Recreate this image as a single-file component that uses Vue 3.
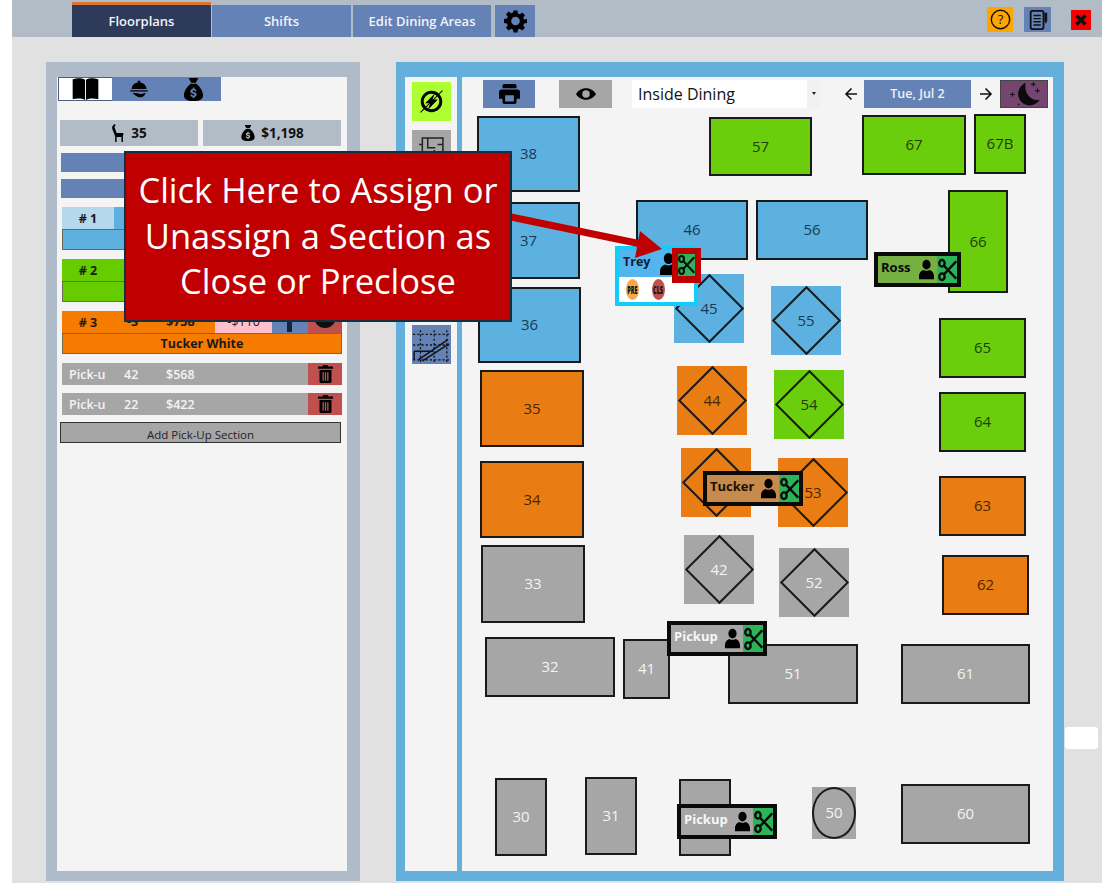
<script setup>
const originX = 462
const originY = 110

const tables = [
  { n: '38', x: 477, y: 116, w: 103, h: 76, c: 'blue' },
  { n: '37', x: 477, y: 202, w: 103, h: 77, c: 'blue' },
  { n: '36', x: 478, y: 287, w: 103, h: 76, c: 'blue' },
  { n: '46', x: 636, y: 200, w: 112, h: 60, c: 'blue' },
  { n: '56', x: 756, y: 200, w: 112, h: 60, c: 'blue' },
  { n: '57', x: 709, y: 117, w: 103, h: 59, c: 'green' },
  { n: '67', x: 862, y: 115, w: 104, h: 60, c: 'green' },
  { n: '67B', x: 974, y: 114, w: 52, h: 60, c: 'green' },
  { n: '66', x: 948, y: 190, w: 60, h: 103, c: 'green' },
  { n: '65', x: 939, y: 318, w: 87, h: 60, c: 'green' },
  { n: '64', x: 939, y: 392, w: 87, h: 60, c: 'green' },
  { n: '35', x: 480, y: 370, w: 104, h: 77, c: 'orange' },
  { n: '34', x: 480, y: 461, w: 104, h: 77, c: 'orange' },
  { n: '63', x: 939, y: 476, w: 87, h: 60, c: 'orange' },
  { n: '62', x: 942, y: 555, w: 87, h: 60, c: 'orange' },
  { n: '33', x: 481, y: 545, w: 104, h: 78, c: 'gray' },
  { n: '32', x: 485, y: 637, w: 130, h: 60, c: 'gray' },
  { n: '41', x: 623, y: 639, w: 47, h: 60, c: 'gray' },
  { n: '51', x: 728, y: 644, w: 130, h: 60, c: 'gray' },
  { n: '61', x: 901, y: 644, w: 129, h: 60, c: 'gray' },
  { n: '30', x: 495, y: 778, w: 52, h: 78, c: 'gray' },
  { n: '31', x: 585, y: 777, w: 52, h: 78, c: 'gray' },
  { n: '40', x: 679, y: 779, w: 52, h: 77, c: 'gray' },
  { n: '60', x: 901, y: 784, w: 129, h: 60, c: 'gray' }
]

const diamonds = [
  { n: '45', x: 674, y: 274, c: 'blue' },
  { n: '55', x: 771, y: 286, c: 'blue' },
  { n: '44', x: 677, y: 366, c: 'orange' },
  { n: '54', x: 774, y: 370, c: 'green' },
  { n: '43', x: 681, y: 448, c: 'orange' },
  { n: '53', x: 778, y: 458, c: 'orange' },
  { n: '42', x: 684, y: 535, c: 'gray' },
  { n: '52', x: 779, y: 548, c: 'gray' }
]

const servers = [
  { name: 'Ross', x: 874, y: 252, w: 87, c: 'ross' },
  { name: 'Tucker', x: 703, y: 471, w: 100, c: 'tucker' },
  { name: 'Pickup', x: 667, y: 621, w: 100, c: 'pickup' },
  { name: 'Pickup', x: 677, y: 804, w: 100, c: 'pickup' }
]

const pickups = [
  { covers: 42, sales: '$568' },
  { covers: 22, sales: '$422' }
]

function place(item) {
  const style = { left: item.x - originX + 'px', top: item.y - originY + 'px' }
  if (item.w) style.width = item.w + 'px'
  if (item.h) style.height = item.h + 'px'
  return style
}
</script>

<template>
  <svg class="sprites" aria-hidden="true">
    <symbol id="i-gear" viewBox="0 0 24 24">
      <path fill-rule="evenodd" d="M10 1h4l.6 3.100 1.900.8 2.600-1.800 2.800 2.800-1.800 2.600.8 1.900L24 10v4l-3.100.6-.8 1.900 1.800 2.600-2.800 2.800-2.600-1.800-1.900.8L14 24h-4l-.6-3.100-1.900-.8-2.600 1.800-2.800-2.800 1.800-2.600-.8-1.900L0 14v-4l3.100-.6.8-1.900L2.100 4.900l2.800-2.800 2.600 1.800 1.900-.8zM12 7.500a4.500 4.500 0 1 0 0 9 4.500 4.500 0 0 0 0-9z" />
    </symbol>
    <symbol id="i-book" viewBox="0 0 28 24">
      <path d="M1 1c4-1 9-1 12.500 1v22c-3.500-2-8.500-2-12.500-1a1 1 0 0 1-1-1V2a1 1 0 0 1 1-1zM27 1c-4-1-9-1-12.500 1v22c3.500-2 8.500-2 12.500-1a1 1 0 0 0 1-1V2a1 1 0 0 0-1-1z" />
    </symbol>
    <symbol id="i-cloche" viewBox="0 0 24 24">
      <path d="M10.500 2h3v2.200A9 9 0 0 1 21 12H3a9 9 0 0 1 7.500-7.800zM1.500 13.500h21V15h-21zM4 16.500l6 .5c2 0 3 1 5 1l5-1.500c-1 3-3 5.500-6 5.500-4 0-7-2.500-10-5.500z" />
    </symbol>
    <symbol id="i-bag" viewBox="0 0 24 24">
      <path fill-rule="evenodd" d="M7 0h10l-2.500 5h-5zM9 6h6c4 3 7 8 7 12 0 4-3 6-10 6S2 22 2 18c0-4 3-9 7-12zm2.300 4v1.300c-1.500.3-2.500 1.300-2.500 2.600 0 3 4.300 2 4.300 3.500 0 .6-.5.9-1.200.9-.8 0-1.300-.4-1.400-1.100H8.700c.1 1.400 1.100 2.300 2.600 2.600V21h1.500v-1.200c1.600-.3 2.500-1.300 2.500-2.600 0-3-4.300-2.100-4.300-3.500 0-.5.500-.8 1.100-.8.700 0 1.100.3 1.200 1h1.800c-.1-1.300-1-2.300-2.300-2.600V10z" />
    </symbol>
    <symbol id="i-chair" viewBox="0 0 14 20">
      <path d="M1 3 3.500 0 5 1 3.600 3.200 6 10h7.500v2.500H13V20h-1.600v-5.500H6V20H4.400v-6.500L1.200 5.500z" />
    </symbol>
    <symbol id="i-printer" viewBox="0 0 24 24">
      <path fill-rule="evenodd" d="M6 1h12a2 2 0 0 1 2 2v3H4V3a2 2 0 0 1 2-2zM3 7.500h18a3 3 0 0 1 3 3V18h-4v4a2 2 0 0 1-2 2H6a2 2 0 0 1-2-2v-4H0v-7.500a3 3 0 0 1 3-3zM7 14v7h10v-7z" />
    </symbol>
    <symbol id="i-eye" viewBox="0 0 24 14">
      <path fill-rule="evenodd" d="M12 0c5.500 0 9.800 3.200 12 7-2.200 3.800-6.500 7-12 7S2.200 10.800 0 7c2.200-3.800 6.500-7 12-7zm0 2.500a4.500 4.500 0 1 0 0 9 4.500 4.500 0 0 0 0-9z" />
    </symbol>
    <symbol id="i-person" viewBox="0 0 20 26">
      <ellipse cx="10" cy="6.500" rx="5.500" ry="6.500" />
      <path d="M0 26v-4c0-5 3-7.500 6-8.500 2.500 1.500 5.500 1.500 8 0 3 1 6 3.500 6 8.500v4z" />
    </symbol>
    <symbol id="i-scissors" viewBox="0 0 24 28">
      <g fill="none" stroke="currentColor" stroke-width="3">
        <ellipse cx="5" cy="5.500" rx="3.400" ry="4.200" />
        <ellipse cx="5" cy="22.500" rx="3.400" ry="4.200" />
        <path d="M7.500 8.500 23 25M7.500 19.500 23 3" />
      </g>
    </symbol>
    <symbol id="i-trash" viewBox="0 0 20 24">
      <path fill-rule="evenodd" d="M7 0h6l1 2h6v3H0V2h6zM2 6.500h16V22a2 2 0 0 1-2 2H4a2 2 0 0 1-2-2zM6 9.500V21h1.800V9.500zm3.100 0V21h1.800V9.500zm3.100 0V21H14V9.500z" />
    </symbol>
    <symbol id="i-bolt" viewBox="0 0 32 32">
      <circle cx="16" cy="16" r="11" fill="none" stroke="currentColor" stroke-width="3.500" />
      <path d="M20.500 6 8.500 18h6L11.500 26 23.500 13.500h-6.500z" />
      <path d="M3 29 29 3" stroke="currentColor" stroke-width="1.200" />
    </symbol>
    <symbol id="i-moon" viewBox="0 0 48 28">
      <path d="M26 2a12.500 12.500 0 1 0 15 18c-8 3-18-6-15-18z" />
      <path d="M33.500 1h1v2h2v1h-2v2h-1V4h-2V3h2zM38 8h1v2h2v1h-2v2h-1v-2h-2v-1h2zM11 12h1v2h2v1h-2v2h-1v-2H9v-1h2zM17.500 24.500h1.500V26h-1.500z" />
    </symbol>
  </svg>

  <div class="app">
    <header class="topbar">
      <nav class="tabs">
        <div class="tab active">Floorplans</div>
        <div class="tab">Shifts</div>
        <div class="tab edit">Edit Dining Areas</div>
        <div class="tab gear"><svg class="ico-gear"><use href="#i-gear" /></svg></div>
      </nav>
      <div class="actions">
        <div class="act help">
          <svg viewBox="0 0 24 24" class="ico-help">
            <circle cx="12" cy="12" r="10.500" fill="none" stroke="#111" stroke-width="1.600" />
            <text x="12" y="17.500" text-anchor="middle" class="help-q">?</text>
          </svg>
        </div>
        <div class="act note">
          <svg viewBox="0 0 24 24" class="ico-note">
            <rect x="4" y="2" width="14" height="20" rx="2" fill="none" stroke="#111" stroke-width="2" />
            <path d="M7 7h8M7 10.500h8M7 14h8M7 17.500h8" stroke="#111" stroke-width="1.600" />
            <path d="M19 4h3v9l-1.500 3-1.500-3z" fill="#111" />
          </svg>
        </div>
        <div class="act close">
          <svg viewBox="0 0 20 20" class="ico-close">
            <path d="M5.500 5.500l9 9M14.500 5.500l-9 9" stroke="#111" stroke-width="3.500" />
          </svg>
        </div>
      </div>
    </header>

    <div class="body">
      <aside class="left-panel">
        <div class="left-inner">
          <div class="mode-tabs">
            <div class="mode current"><svg class="ico-book"><use href="#i-book" /></svg></div>
            <div class="mode"><svg class="ico-cloche"><use href="#i-cloche" /></svg></div>
            <div class="mode"><svg class="ico-bag"><use href="#i-bag" /></svg></div>
          </div>

          <div class="stats">
            <div class="stat"><svg class="ico-chair"><use href="#i-chair" /></svg>35</div>
            <div class="stat"><svg class="ico-stat"><use href="#i-bag" /></svg>$1,198</div>
          </div>
          <div class="blue-bar"></div>
          <div class="blue-bar"></div>

          <section class="section first">
            <div class="sec-head">
              <span class="sec-num light">#&nbsp;1</span>
              <span class="sec-fill skyblue"></span>
            </div>
            <div class="sec-name skyblue"></div>
          </section>

          <section class="section second">
            <div class="sec-head">
              <span class="sec-num lime"># 2</span>
              <span class="sec-fill lime"></span>
            </div>
            <div class="sec-name lime"></div>
          </section>

          <section class="section third">
            <div class="sec-head amber">
              <span class="sec-num"># 3</span>
              <span class="cell-covers">-3</span>
              <span class="cell-sales">$758</span>
              <span class="cell-diff">-$110</span>
              <span class="cell-blue"><i class="stem"></i></span>
              <span class="cell-red"><i class="blob"></i></span>
            </div>
            <div class="sec-name amber">Tucker White</div>
          </section>

          <div v-for="p in pickups" :key="p.covers" class="pickup-row">
            <span class="pu-name">Pick-u</span>
            <span class="pu-covers">{{ p.covers }}</span>
            <span class="pu-sales">{{ p.sales }}</span>
            <span class="pu-del"><svg class="ico-trash"><use href="#i-trash" /></svg></span>
          </div>

          <div class="add-pickup"><span>Add Pick-Up Section</span></div>
        </div>
      </aside>

      <section class="right-panel">
        <div class="side-tools">
          <div class="tool bolt"><svg class="ico-bolt"><use href="#i-bolt" /></svg></div>
          <div class="tool plan">
            <svg viewBox="0 0 24 24" class="ico-plan">
              <path d="M4 1h19v22H4zM9 1v9h7M9 23v-8h6v-3M18 7h5M4 7H1M4 17H1" fill="none" stroke="#222" stroke-width="1.400" />
            </svg>
          </div>
          <div class="tool stairs">
            <svg viewBox="0 0 36 36" class="ico-stairs">
              <path d="M1 8h34M1 18h34M1 32h34M8 4v30M21 4v30M33 4v30" fill="none" stroke="#111" stroke-width="1.200" stroke-dasharray="2 2" />
              <path d="M2 24h18M2 24v8M6 32 34 13M10 33 35 17" fill="none" stroke="#111" stroke-width="1.400" />
            </svg>
          </div>
        </div>

        <div class="main">
          <div class="toolbar">
            <div class="tb-btn print"><svg class="ico-print"><use href="#i-printer" /></svg></div>
            <div class="tb-btn eye"><svg class="ico-eye"><use href="#i-eye" /></svg></div>
            <div class="area-select">
              <span class="area-name">Inside Dining</span>
              <span class="area-caret"></span>
            </div>
            <svg class="day-arrow left" viewBox="0 0 14 14">
              <path d="M13 7H2M7.500 1.500 2 7l5.500 5.500" fill="none" stroke="#111" stroke-width="1.600" />
            </svg>
            <div class="date">Tue, Jul 2</div>
            <svg class="day-arrow right" viewBox="0 0 14 14">
              <path d="M1 7h11M6.500 1.500 12 7l-5.500 5.500" fill="none" stroke="#111" stroke-width="1.600" />
            </svg>
            <div class="night"><svg class="ico-moon"><use href="#i-moon" /></svg></div>
          </div>

          <div class="floor">
            <div
              v-for="t in tables"
              :key="t.n"
              class="table"
              :class="t.c"
              :style="place(t)"
            >{{ t.n }}</div>

            <div
              v-for="d in diamonds"
              :key="d.n"
              class="diamond"
              :class="d.c"
              :style="place(d)"
            ><span>{{ d.n }}</span></div>

            <div class="round-table" :style="place({ x: 812, y: 787 })"><span>50</span></div>

            <div class="trey" :style="place({ x: 615, y: 246 })">
              <div class="trey-top">
                <span class="trey-name">Trey</span>
                <svg class="ico-person"><use href="#i-person" /></svg>
              </div>
              <div class="trey-tags">
                <span class="tag pre"><b>PRE</b></span>
                <span class="tag cls"><b>CLS</b></span>
              </div>
            </div>
            <div class="trey-cut" :style="place({ x: 672, y: 248 })">
              <span class="cut"><svg class="ico-scissors"><use href="#i-scissors" /></svg></span>
            </div>

            <div
              v-for="s in servers"
              :key="s.name + s.x"
              class="server"
              :class="s.c"
              :style="place(s)"
            >
              <span class="server-name">{{ s.name }}</span>
              <svg class="ico-person"><use href="#i-person" /></svg>
              <span class="cut"><svg class="ico-scissors"><use href="#i-scissors" /></svg></span>
            </div>
          </div>
        </div>
      </section>
    </div>

    <div class="side-pill"></div>

    <svg class="arrow" viewBox="0 0 160 50">
      <path d="M1 4 131 31" stroke="#c00000" stroke-width="7" />
      <path d="M152 36 125 45 130 18z" fill="#c00000" />
    </svg>
    <div class="callout">Click Here to Assign or<br />Unassign a Section as<br />Close or Preclose</div>
  </div>
</template>

<style>
html,
body {
  background: #fff;
}
</style>

<style scoped>
.sprites {
  position: absolute;
  width: 0;
  height: 0;
}

.app {
  position: relative;
  box-sizing: border-box;
  width: 1090px;
  height: 883px;
  margin-left: 12px;
  background: #e1e1e1;
  font-family: "Open Sans", "Noto Sans", sans-serif;
  overflow: hidden;
}

.topbar {
  display: flex;
  justify-content: space-between;
  height: 37px;
  background: #b2bcc7;
}

.tabs {
  display: flex;
  align-items: flex-end;
  gap: 1px;
  margin-left: 60px;
}

.tab {
  display: flex;
  align-items: center;
  justify-content: center;
  width: 139px;
  height: 32px;
  background: #6482b5;
  color: #f2f4f8;
  font-size: 13px;
  font-weight: 600;
}

.tab.active {
  box-sizing: border-box;
  height: 35px;
  border-top: 3px solid #dc7633;
  background: #2e3a59;
}

.tab.edit {
  width: 138px;
  margin-left: 1px;
}

.tab.gear {
  width: 40px;
  margin-left: 3px;
}

.ico-gear {
  width: 23px;
  height: 24px;
}

.actions {
  display: flex;
  align-items: flex-start;
  margin-right: 11px;
  padding-top: 7px;
}

.act {
  display: flex;
  align-items: center;
  justify-content: center;
}

.help {
  width: 26px;
  height: 25px;
  margin-right: 11px;
  background: #ffa500;
}

.ico-help {
  width: 21px;
  height: 21px;
}

.help-q {
  font-size: 15px;
  font-family: "Open Sans", sans-serif;
  fill: #111;
}

.note {
  width: 27px;
  height: 25px;
  margin-right: 20px;
  background: #6482b5;
}

.ico-note {
  width: 22px;
  height: 22px;
}

.close {
  width: 20px;
  height: 20px;
  margin-top: 3px;
  background: #f40000;
}

.ico-close {
  width: 20px;
  height: 20px;
}

.body {
  display: flex;
  align-items: flex-start;
  gap: 36px;
  padding: 25px 0 0 34px;
}

.left-panel {
  box-sizing: border-box;
  width: 314px;
  height: 819px;
  padding: 15px 13px 10px 11px;
  background: #afbbc8;
}

.left-inner {
  height: 100%;
  background: #f4f4f4;
}

.mode-tabs {
  display: flex;
  width: 163px;
  height: 24px;
  margin-left: 1px;
  background: #6482b5;
}

.mode {
  display: flex;
  flex: 1;
  align-items: center;
  justify-content: center;
}

.mode.current {
  box-sizing: border-box;
  flex: none;
  width: 54px;
  border: 1px solid #50607a;
  border-right: 0;
  background: #fff;
}

.ico-book {
  width: 27px;
  height: 22px;
}

.ico-cloche {
  width: 20px;
  height: 20px;
}

.ico-bag {
  width: 25px;
  height: 23px;
}

.stats {
  display: flex;
  gap: 5px;
  margin: 19px 0 7px 3px;
}

.stat {
  display: flex;
  align-items: center;
  justify-content: center;
  gap: 5px;
  width: 138px;
  height: 26px;
  background: #b2bcc7;
  color: #111;
  font-size: 13.5px;
  font-weight: 700;
}

.ico-stat {
  width: 16px;
  height: 16px;
}

.ico-chair {
  width: 13px;
  height: 18px;
  margin-right: 2px;
}

.blue-bar {
  width: 280px;
  height: 19px;
  margin: 0 0 7px 4px;
  background: #6482b5;
}

.section {
  width: 280px;
  margin: 9px 0 0 5px;
  font-size: 12.5px;
  font-weight: 700;
  color: #1a1a1a;
}

.sec-head {
  display: flex;
  height: 22px;
}

.sec-num {
  display: flex;
  align-items: center;
  justify-content: center;
  width: 52px;
}

.sec-fill {
  flex: 1;
}

.sec-name {
  box-sizing: border-box;
  display: flex;
  align-items: center;
  justify-content: center;
  height: 21px;
  border: 1px solid #6b6b50;
}

.light {
  background: #b4d8ec;
}

.skyblue {
  background: #5fb0df;
}

.lime {
  background: #66cc00;
}

.amber {
  background: #f57c00;
}

.cell-covers {
  box-sizing: border-box;
  width: 40px;
  padding-left: 13px;
  line-height: 22px;
}

.cell-sales {
  box-sizing: border-box;
  width: 61px;
  padding-left: 12px;
  line-height: 22px;
}

.cell-diff {
  width: 57px;
  background: #ffc0cb;
  font-weight: 400;
  line-height: 22px;
  text-align: center;
}

.cell-blue {
  position: relative;
  width: 36px;
  background: #6482b5;
}

.stem {
  position: absolute;
  top: 8px;
  left: 15px;
  width: 5px;
  height: 13px;
  background: #14233f;
}

.cell-red {
  position: relative;
  flex: 1;
  background: #c0504d;
}

.blob {
  position: absolute;
  top: 6px;
  left: 6px;
  width: 22px;
  height: 11px;
  border-radius: 0 0 11px 11px;
  background: #0e0e0e;
}

.pickup-row {
  display: flex;
  align-items: center;
  width: 280px;
  height: 22px;
  margin: 8px 0 0 5px;
  background: #a6a6a6;
  color: #f4f4f4;
  font-size: 12.5px;
  font-weight: 600;
}

.third + .pickup-row {
  margin-top: 9px;
}

.pu-name {
  box-sizing: border-box;
  width: 62px;
  padding-left: 7px;
}

.pu-covers {
  width: 42px;
}

.pu-sales {
  flex: 1;
}

.pu-del {
  display: flex;
  align-items: center;
  justify-content: center;
  width: 34px;
  height: 22px;
  background: #c0504d;
}

.ico-trash {
  width: 15px;
  height: 18px;
}

.add-pickup {
  box-sizing: border-box;
  width: 281px;
  height: 21px;
  margin: 7px 0 0 3px;
  overflow: hidden;
  border: 1px solid #333;
  background: #a6a6a6;
  color: #222;
  font-size: 11.5px;
  line-height: 24px;
  text-align: center;
}

.right-panel {
  box-sizing: border-box;
  display: flex;
  gap: 5px;
  width: 668px;
  height: 819px;
  padding: 15px 11px 10px 9px;
  background: #64afdb;
}

.side-tools {
  box-sizing: border-box;
  display: flex;
  flex-direction: column;
  align-items: center;
  width: 52px;
  padding-top: 5px;
  background: #f4f4f4;
}

.tool {
  display: flex;
  align-items: center;
  justify-content: center;
  width: 39px;
  height: 39px;
}

.bolt {
  background: #adff2f;
}

.ico-bolt {
  width: 27px;
  height: 27px;
}

.plan {
  margin-top: 9px;
  background: #a6a6a6;
}

.ico-plan {
  width: 26px;
  height: 26px;
}

.stairs {
  margin-top: 156px;
  background: #6482b5;
}

.ico-stairs {
  width: 38px;
  height: 38px;
}

.main {
  display: flex;
  flex: 1;
  flex-direction: column;
  background: #f4f4f4;
}

.toolbar {
  display: flex;
  align-items: center;
  height: 33px;
  padding-left: 21px;
}

.tb-btn {
  display: flex;
  align-items: center;
  justify-content: center;
  width: 52px;
  height: 28px;
}

.print {
  background: #6482b5;
}

.ico-print {
  width: 21px;
  height: 21px;
}

.eye {
  width: 53px;
  margin-left: 24px;
  background: #a6a6a6;
}

.ico-eye {
  width: 20px;
  height: 12px;
}

.area-select {
  display: flex;
  justify-content: space-between;
  box-sizing: border-box;
  width: 188px;
  height: 28px;
  margin-left: 20px;
  padding-left: 6px;
  background: #fff;
}

.area-name {
  color: #111;
  font-size: 16px;
  font-weight: 500;
  line-height: 28px;
}

.area-caret {
  position: relative;
  width: 13px;
  background: #f1f1f1;
}

.area-caret::after {
  content: "";
  position: absolute;
  top: 12px;
  left: 5px;
  border: 2px solid transparent;
  border-top: 3px solid #222;
}

.day-arrow {
  width: 14px;
  height: 14px;
}

.day-arrow.left {
  margin: 0 6px 0 24px;
}

.day-arrow.right {
  margin-left: 8px;
}

.date {
  width: 107px;
  height: 28px;
  background: #6482b5;
  color: #eef1f6;
  font-size: 12.5px;
  font-weight: 600;
  line-height: 28px;
  text-align: center;
}

.night {
  display: flex;
  align-items: center;
  justify-content: center;
  box-sizing: border-box;
  width: 48px;
  height: 28px;
  margin-left: 7px;
  border: 1px solid #444;
  background: #74456e;
}

.ico-moon {
  width: 46px;
  height: 26px;
  fill: #0c0c0c;
}

.floor {
  position: relative;
  flex: 1;
}

.table {
  position: absolute;
  box-sizing: border-box;
  display: flex;
  align-items: center;
  justify-content: center;
  padding-bottom: 2px;
  border: 2px solid #1a1a1a;
  font-size: 15px;
}

.blue {
  background: #5cb1e0;
  color: #1b3a52;
}

.green {
  background: #6bce0c;
  color: #1f3d04;
}

.orange {
  background: #e97c12;
  color: #4a2703;
}

.gray {
  background: #a6a6a6;
  color: #f4f4f4;
}

.diamond {
  position: absolute;
  display: flex;
  align-items: center;
  justify-content: center;
  width: 70px;
  height: 69px;
  font-size: 15px;
}

.diamond::before {
  content: "";
  position: absolute;
  box-sizing: border-box;
  top: 10px;
  left: 10.5px;
  width: 49px;
  height: 49px;
  border: 2px solid #1a1a1a;
  transform: rotate(45deg);
}

.diamond span {
  position: relative;
  margin-bottom: 2px;
}

.round-table {
  position: absolute;
  display: flex;
  align-items: center;
  justify-content: center;
  width: 44px;
  height: 52px;
  background: #a6a6a6;
  color: #f4f4f4;
  font-size: 15px;
}

.round-table::before {
  content: "";
  position: absolute;
  box-sizing: border-box;
  inset: 0;
  border: 2px solid #1a1a1a;
  border-radius: 50%;
}

.round-table span {
  position: relative;
  margin-bottom: 2px;
}

.trey {
  position: absolute;
  box-sizing: border-box;
  width: 83px;
  height: 60px;
  border: 4px solid #10cdfb;
  background: #fff;
}

.trey-top {
  display: flex;
  align-items: center;
  height: 27px;
  padding-left: 4px;
  background: #54b4ee;
}

.trey-name {
  width: 37px;
  margin-top: -5px;
  color: #102030;
  font-size: 12.5px;
  font-weight: 700;
}

.trey .ico-person {
  width: 17px;
  height: 24px;
  margin-top: 1px;
}

.trey-tags {
  display: flex;
  gap: 13px;
  padding: 2px 0 0 7px;
}

.tag {
  display: flex;
  align-items: center;
  justify-content: center;
  width: 13px;
  height: 21px;
  border-radius: 50%;
  color: #111;
  font-size: 10px;
}

.tag b {
  transform: scaleX(0.55);
  font-weight: 800;
}

.pre {
  background: #f5a950;
}

.cls {
  background: #c0504d;
}

.trey-cut {
  position: absolute;
  box-sizing: border-box;
  display: flex;
  width: 29px;
  height: 35px;
  border: 6px solid #c00000;
  border-bottom-width: 7px;
}

.trey-cut .cut {
  width: 100%;
}

.server {
  position: absolute;
  box-sizing: border-box;
  display: flex;
  align-items: center;
  height: 35px;
  border: 4px solid #0a0a0a;
  font-size: 13px;
  font-weight: 700;
}

.server-name {
  flex: 1;
  margin-top: -6px;
  padding-left: 3px;
}

.server .ico-person {
  width: 15px;
  height: 23px;
  margin-right: 3px;
}

.cut {
  display: flex;
  align-items: center;
  justify-content: center;
  width: 20px;
  height: 100%;
  background: #2db45a;
  color: #0a0a0a;
}

.ico-scissors {
  width: 19px;
  height: 24px;
}

.ross {
  background: #76b043;
  color: #0a0a0a;
}

.tucker {
  background: #c68a4d;
  color: #1a1005;
}

.pickup {
  background: #a6a6a6;
  color: #f6f6f6;
}

.side-pill {
  position: absolute;
  top: 727px;
  left: 1053px;
  width: 33px;
  height: 22px;
  border-radius: 3px;
  background: #fff;
}

.arrow {
  position: absolute;
  top: 213px;
  left: 498px;
  width: 160px;
  height: 50px;
}

.callout {
  position: absolute;
  top: 151px;
  left: 112px;
  box-sizing: border-box;
  width: 388px;
  height: 171px;
  padding-top: 14px;
  border: 2px solid #12303f;
  background: #c00000;
  color: #fff;
  font-size: 34.5px;
  line-height: 45.5px;
  text-align: center;
}
</style>
